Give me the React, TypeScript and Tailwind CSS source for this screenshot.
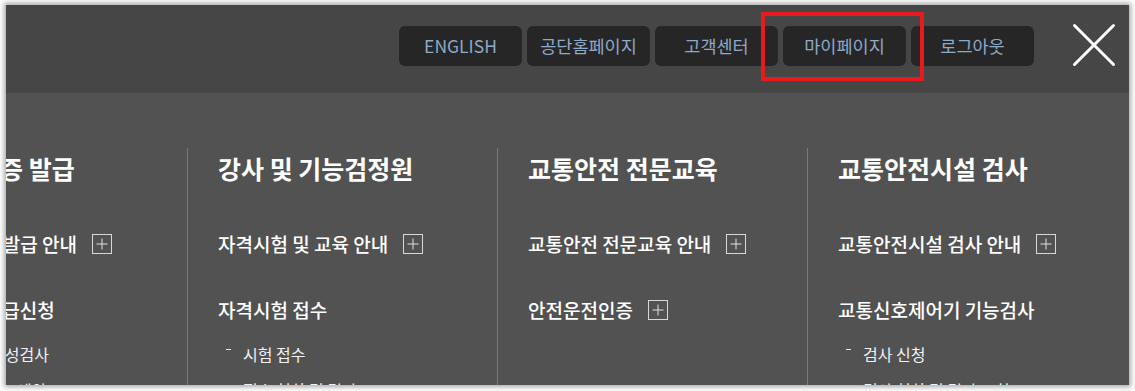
import React from 'react';

const FONT = { fontFamily: '"Noto Sans CJK KR", "Noto Sans", sans-serif' };

const topLinks = ['ENGLISH', '공단홈페이지', '고객센터', '마이페이지', '로그아웃'];

interface MenuItem {
  label: string;
  expandable?: boolean;
  subs?: string[];
}

interface MenuColumn {
  title: string;
  items: MenuItem[];
}

const columns: MenuColumn[] = [
  {
    title: '강사 및 기능검정원',
    items: [
      { label: '자격시험 및 교육 안내', expandable: true },
      { label: '자격시험 접수', subs: ['시험 접수', '접수 현황 및 결과'] },
    ],
  },
  {
    title: '교통안전 전문교육',
    items: [
      { label: '교통안전 전문교육 안내', expandable: true },
      { label: '안전운전인증', expandable: true },
    ],
  },
  {
    title: '교통안전시설 검사',
    items: [
      { label: '교통안전시설 검사 안내', expandable: true },
      { label: '교통신호제어기 기능검사', subs: ['검사 신청', '검사 현황 및 결과 조회'] },
    ],
  },
];

function PlusBox() {
  return (
    <svg width="20" height="20" viewBox="0 0 20 20" className="ml-[15px] shrink-0">
      <rect x="0.5" y="0.5" width="19" height="19" fill="none" stroke="#d8d8d8" strokeWidth="1" />
      <path d="M10 4.5V15.5M4.5 10H15.5" stroke="#e0e0e0" strokeWidth="1" />
    </svg>
  );
}

function SubItem({ text }: { text: string }) {
  return (
    <li className="h-[30px] flex items-center pl-[8px] text-[16px] text-[#f2f2f2] whitespace-nowrap">
      <span className="inline-block w-[5px] h-[1.5px] bg-[#e8e8e8] mb-[9px] mr-[12px]" />
      {text}
    </li>
  );
}

export default function App() {
  return (
    <div className="w-[1135px] h-[391px] bg-white pt-[5px] pl-[6px]" style={FONT}>
      <div className="relative w-[1123px] h-[380px] overflow-hidden bg-[#525252] shadow-[0_0_5px_2px_rgba(0,0,0,0.35)]">
        {/* header bar */}
        <div className="h-[88px] bg-[#464646] flex justify-end items-start pt-[21px] pr-[13px]">
          <div className="flex gap-[5px]">
            {topLinks.map((t) => (
              <a
                key={t}
                className="w-[123px] h-[40px] rounded-[6px] bg-[#262626] flex items-center justify-center text-[17.5px] text-[#8fa9c9]"
              >
                {t}
              </a>
            ))}
          </div>
          <button className="ml-[38px] -mt-[3px] w-[44px] h-[44px]">
            <svg width="44" height="44" viewBox="0 0 44 44">
              <path d="M2.5 2.5L41.5 41.5M41.5 2.5L2.5 41.5" stroke="#fff" strokeWidth="3" strokeLinecap="round" />
            </svg>
          </button>
        </div>

        {/* highlight annotation */}
        <div className="absolute left-[755px] top-[7px] w-[163px] h-[69px] border-4 border-[#e8191f]" />

        {/* menu columns */}
        <div className="flex pt-[55px] h-[292px]">
          {/* first column, scrolled partly out of view */}
          <div className="w-[181px] shrink-0 overflow-hidden text-white whitespace-nowrap">
            <h3 className="h-[40px] leading-[40px] text-[25px] font-bold ml-[-52px]">자격증 발급</h3>
            <div className="mt-[36px] h-[40px] flex items-center text-[19px] font-medium ml-[-60px]">
              자격증 발급 안내
              <PlusBox />
            </div>
            <div className="mt-[26px] h-[40px] flex items-center text-[19px] font-medium ml-[-78px]">
              자격증 발급신청
            </div>
            <ul className="mt-[9px] space-y-[6px] text-[16px] text-[#f2f2f2]">
              <li className="h-[30px] flex items-center ml-[-16px]">적성검사</li>
              <li className="h-[30px] flex items-center ml-[11px]">예약</li>
            </ul>
          </div>

          {columns.map((col) => (
            <div
              key={col.title}
              className="w-[310px] shrink-0 border-l border-[#7a7a7a] pl-[30px] text-white whitespace-nowrap"
            >
              <h3 className="h-[40px] leading-[40px] text-[25px] font-bold">{col.title}</h3>
              {col.items.map((item, i) => (
                <div key={item.label} className={i === 0 ? 'mt-[36px]' : 'mt-[26px]'}>
                  <div className="h-[40px] flex items-center text-[19px] font-medium">
                    {item.label}
                    {item.expandable && <PlusBox />}
                  </div>
                  {item.subs && (
                    <ul className="mt-[9px] space-y-[6px]">
                      {item.subs.map((s) => (
                        <SubItem key={s} text={s} />
                      ))}
                    </ul>
                  )}
                </div>
              ))}
            </div>
          ))}
        </div>
      </div>
    </div>
  );
}
